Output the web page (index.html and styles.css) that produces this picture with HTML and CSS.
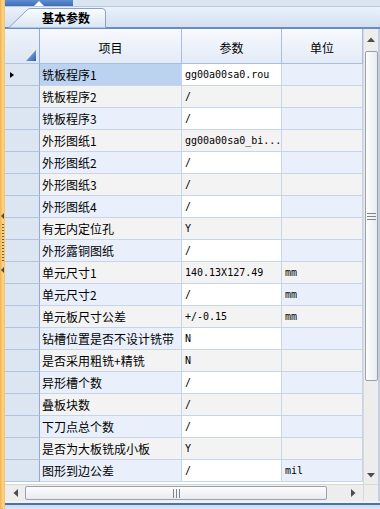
FILE: index.html
```html
<!DOCTYPE html>
<html lang="zh">
<head>
    <meta charset="UTF-8">
    <title>基本参数</title>
    <link rel="stylesheet" href="styles.css">
</head>
<body>
<div class="app">
    <div class="splitter">
        <span class="split-arrow"></span>
        <span class="split-dots"></span>
        <span class="split-arrow"></span>
    </div>
    <div class="main">
        <div class="topbar">
            <div class="topbar-tab">
                <svg width="10" height="6" viewBox="0 0 10 6"><polygon points="0,6 5,1 10,6" fill="#fff"/></svg>
            </div>
        </div>
        <div class="tabstrip">
            <div class="tab">
                <svg class="tab-shape" width="98" height="20" viewBox="0 0 98 20">
                    <defs>
                        <linearGradient id="tabg" x1="0" y1="0" x2="0" y2="1">
                            <stop offset="0" stop-color="#fbfdff"/>
                            <stop offset="1" stop-color="#d9e5f5"/>
                        </linearGradient>
                    </defs>
                    <path d="M0.5,20 L19,2 Q20.5,0.5 23,0.5 L94,0.5 Q97.5,0.5 97.5,4 L97.5,20 Z" fill="url(#tabg)" stroke="#8aa2c6"/>
                </svg>
                <span class="tab-label">基本参数</span>
            </div>
        </div>
        <div class="gridbox">
            <div class="grid">
                <div class="row head">
                    <div class="cell rh">
                        <svg class="corner-tri" width="10" height="11" viewBox="0 0 10 11">
                            <defs>
                                <linearGradient id="trig" x1="0" y1="0" x2="1" y2="1">
                                    <stop offset="0" stop-color="#a9c6ee"/>
                                    <stop offset="1" stop-color="#2d5fab"/>
                                </linearGradient>
                            </defs>
                            <polygon points="10,0 10,11 0,11" fill="url(#trig)"/>
                        </svg>
                    </div>
                    <div class="cell">项目</div>
                    <div class="cell">参数</div>
                    <div class="cell">单位</div>
                </div>
                <div class="row odd sel">
                    <div class="cell rh"><span class="pointer"></span></div>
                    <div class="cell name">铣板程序1</div>
                    <div class="cell val">gg00a00sa0.rou</div>
                    <div class="cell unit"></div>
                </div>
                <div class="row even">
                    <div class="cell rh"></div>
                    <div class="cell name">铣板程序2</div>
                    <div class="cell val">/</div>
                    <div class="cell unit"></div>
                </div>
                <div class="row odd">
                    <div class="cell rh"></div>
                    <div class="cell name">铣板程序3</div>
                    <div class="cell val">/</div>
                    <div class="cell unit"></div>
                </div>
                <div class="row even">
                    <div class="cell rh"></div>
                    <div class="cell name">外形图纸1</div>
                    <div class="cell val">gg00a00sa0_bi...</div>
                    <div class="cell unit"></div>
                </div>
                <div class="row odd">
                    <div class="cell rh"></div>
                    <div class="cell name">外形图纸2</div>
                    <div class="cell val">/</div>
                    <div class="cell unit"></div>
                </div>
                <div class="row even">
                    <div class="cell rh"></div>
                    <div class="cell name">外形图纸3</div>
                    <div class="cell val">/</div>
                    <div class="cell unit"></div>
                </div>
                <div class="row odd">
                    <div class="cell rh"></div>
                    <div class="cell name">外形图纸4</div>
                    <div class="cell val">/</div>
                    <div class="cell unit"></div>
                </div>
                <div class="row even">
                    <div class="cell rh"></div>
                    <div class="cell name">有无内定位孔</div>
                    <div class="cell val">Y</div>
                    <div class="cell unit"></div>
                </div>
                <div class="row odd">
                    <div class="cell rh"></div>
                    <div class="cell name">外形露铜图纸</div>
                    <div class="cell val">/</div>
                    <div class="cell unit"></div>
                </div>
                <div class="row even">
                    <div class="cell rh"></div>
                    <div class="cell name">单元尺寸1</div>
                    <div class="cell val">140.13X127.49</div>
                    <div class="cell unit">mm</div>
                </div>
                <div class="row odd">
                    <div class="cell rh"></div>
                    <div class="cell name">单元尺寸2</div>
                    <div class="cell val">/</div>
                    <div class="cell unit">mm</div>
                </div>
                <div class="row even">
                    <div class="cell rh"></div>
                    <div class="cell name">单元板尺寸公差</div>
                    <div class="cell val">+/-0.15</div>
                    <div class="cell unit">mm</div>
                </div>
                <div class="row odd">
                    <div class="cell rh"></div>
                    <div class="cell name">钻槽位置是否不设计铣带</div>
                    <div class="cell val">N</div>
                    <div class="cell unit"></div>
                </div>
                <div class="row even">
                    <div class="cell rh"></div>
                    <div class="cell name">是否采用粗铣+精铣</div>
                    <div class="cell val">N</div>
                    <div class="cell unit"></div>
                </div>
                <div class="row odd">
                    <div class="cell rh"></div>
                    <div class="cell name">异形槽个数</div>
                    <div class="cell val">/</div>
                    <div class="cell unit"></div>
                </div>
                <div class="row even">
                    <div class="cell rh"></div>
                    <div class="cell name">叠板块数</div>
                    <div class="cell val">/</div>
                    <div class="cell unit"></div>
                </div>
                <div class="row odd">
                    <div class="cell rh"></div>
                    <div class="cell name">下刀点总个数</div>
                    <div class="cell val">/</div>
                    <div class="cell unit"></div>
                </div>
                <div class="row even">
                    <div class="cell rh"></div>
                    <div class="cell name">是否为大板铣成小板</div>
                    <div class="cell val">Y</div>
                    <div class="cell unit"></div>
                </div>
                <div class="row odd">
                    <div class="cell rh"></div>
                    <div class="cell name">图形到边公差</div>
                    <div class="cell val">/</div>
                    <div class="cell unit">mil</div>
                </div>
            </div>

            <div class="vscroll">
                <div class="vs-btn">
                    <svg width="8" height="5" viewBox="0 0 8 5"><polygon points="0,5 4,0.5 8,5" fill="#4d4d4d"/></svg>
                </div>
                <div class="vs-thumb">
                    <svg width="9" height="7" viewBox="0 0 9 7">
                        <path d="M0,0.5 H9 M0,3.5 H9 M0,6.5 H9" stroke="#7d8591" stroke-width="1"/>
                    </svg>
                </div>
                <div class="vs-space"></div>
                <div class="vs-btn down">
                    <svg width="8" height="5" viewBox="0 0 8 5"><polygon points="0,0 8,0 4,4.5" fill="#4d4d4d"/></svg>
                </div>
            </div>

            <div class="hscroll">
                <div class="hs-btn">
                    <svg width="5" height="8" viewBox="0 0 5 8"><polygon points="5,0 5,8 0.5,4" fill="#4d4d4d"/></svg>
                </div>
                <div class="hs-thumb">
                    <svg width="7" height="9" viewBox="0 0 7 9">
                        <path d="M0.5,0 V9 M3.5,0 V9 M6.5,0 V9" stroke="#7d8591" stroke-width="1"/>
                    </svg>
                </div>
                <div class="hs-space"></div>
                <div class="hs-btn">
                    <svg width="5" height="8" viewBox="0 0 5 8"><polygon points="0,0 0,8 4.5,4" fill="#4d4d4d"/></svg>
                </div>
            </div>
            <div class="corner"></div>
        </div>
        <div class="bottom"></div>
    </div>
</div>
</body>
</html>
```

FILE: styles.css
```css
body {
    margin: 0;
    font-family: "Noto Sans CJK SC", sans-serif;
    font-size: 12px;
    color: #000;
    background: #d9e4f2;
}
.app {
    display: flex;
    width: 380px;
    height: 509px;
    overflow: hidden;
}

/* left splitter */
.splitter {
    width: 5px;
    flex: none;
    box-sizing: border-box;
    padding-bottom: 24px;
    background: linear-gradient(to right, #efb24a, #fcd68c 60%, #f3bf62);
    display: flex;
    flex-direction: column;
    align-items: center;
    justify-content: center;
    gap: 5px;
}
.split-arrow {
    width: 0;
    height: 0;
    border-top: 3px solid transparent;
    border-bottom: 3px solid transparent;
    border-right: 3px solid #4a4a4a;
}
.split-dots {
    width: 2px;
    height: 38px;
    background: repeating-linear-gradient(to bottom, #6e5c3c 0 1px, transparent 1px 3px);
}

.main {
    flex: 1;
    min-width: 0;
    display: flex;
    flex-direction: column;
}

/* top strip */
.topbar {
    height: 6px;
    background: #dbe5f2;
    border-bottom: 1px solid #b8c8dd;
    display: flex;
}
.topbar-tab {
    width: 68px;
    background: linear-gradient(#5f8dd1, #3e6db6);
    display: flex;
    justify-content: center;
    align-items: flex-end;
}
.topbar-tab svg {
    display: block;
}

/* tab strip */
.tabstrip {
    height: 22px;
    box-sizing: border-box;
    padding-left: 3px;
    background: linear-gradient(#eaf1fa, #d3e0f2);
    border-bottom: 2px solid #6a8dc3;
    display: flex;
    align-items: flex-end;
    position: relative;
}
.tab {
    position: relative;
    width: 98px;
    height: 20px;
    box-sizing: border-box;
    padding-left: 34px;
    margin-bottom: -1px;
    font-weight: bold;
    line-height: 19px;
}
.tab-shape {
    position: absolute;
    left: 0;
    top: 0;
}
.tab-label {
    position: relative;
}

/* grid */
.gridbox {
    display: grid;
    grid-template-columns: 358px 15px;
    grid-template-rows: 455px 17px;
    border-right: 2px solid #c3cfdf;
    background: #fff;
}
.grid {
    overflow: hidden;
    background: #fff;
}
.row {
    display: grid;
    grid-template-columns: 35px 142px 100px 81px;
    height: 22px;
}
.cell {
    box-sizing: border-box;
    border-right: 1px solid #c7d5eb;
    border-bottom: 1px solid #c7d5eb;
    padding: 1px 0 0 2px;
    line-height: 20px;
    white-space: nowrap;
    overflow: hidden;
}
.row.head {
    height: 35px;
}
.head .cell {
    padding: 3px 0 0;
    text-align: center;
    line-height: 31px;
    background: linear-gradient(#f7f9fd, #e3ebf7);
    border-color: #abbed9;
}
.cell.rh {
    background: #dce5f2;
    border-right: 1px solid #92aacd;
    border-bottom-color: #b3c4dd;
    padding: 0;
}
.head .cell.rh {
    position: relative;
    padding: 0;
    background: linear-gradient(#eef3fa, #dde6f3);
    border-right-color: #92aacd;
}
.corner-tri {
    position: absolute;
    right: 3px;
    bottom: 2px;
}
.pointer {
    display: block;
    width: 0;
    height: 0;
    margin: 8px 0 0 5px;
    border-top: 3px solid transparent;
    border-bottom: 3px solid transparent;
    border-left: 4px solid #000;
}
.val, .unit {
    font-family: "DejaVu Sans Mono", "Liberation Mono", monospace;
    font-size: 10px;
    padding-left: 3px;
}
.odd .name, .odd .unit {
    background: #e9f0fb;
}
.odd .val {
    background: #fff;
}
.even .name, .even .val, .even .unit {
    background: #f3f3f3;
}
.sel .name {
    background: #bbd3f1;
}

/* scrollbars */
.vscroll {
    background: #ededed;
    border-left: 1px solid #d8d8d8;
    display: flex;
    flex-direction: column;
    align-items: center;
}
.vs-btn {
    height: 21px;
    flex: none;
    display: flex;
    align-items: center;
    justify-content: center;
}
.vs-btn.down {
    height: 17px;
}
.vs-thumb {
    width: 13px;
    height: 330px;
    box-sizing: border-box;
    margin-top: 1px;
    border: 1px solid #97a2b1;
    border-radius: 2px;
    background: linear-gradient(to right, #fdfdfd, #e9ebef);
    display: flex;
    align-items: center;
    justify-content: center;
}
.vs-space, .hs-space {
    flex: 1;
}
.hscroll {
    background: #ededed;
    border-top: 1px solid #d8d8d8;
    display: flex;
    align-items: center;
}
.hs-btn {
    width: 20px;
    height: 100%;
    flex: none;
    display: flex;
    align-items: center;
    justify-content: center;
}
.hs-thumb {
    width: 302px;
    height: 14px;
    box-sizing: border-box;
    border: 1px solid #97a2b1;
    border-radius: 2px;
    background: linear-gradient(#fdfdfd, #e9ebef);
    display: flex;
    align-items: center;
    justify-content: center;
}
.corner {
    background: #ededed;
    border-top: 1px solid #d8d8d8;
    border-left: 1px solid #d8d8d8;
}
.bottom {
    height: 6px;
    background: linear-gradient(#eef3fa 0 2px, #4a72b0 2px 4px, #d0ddef 4px);
}
```
